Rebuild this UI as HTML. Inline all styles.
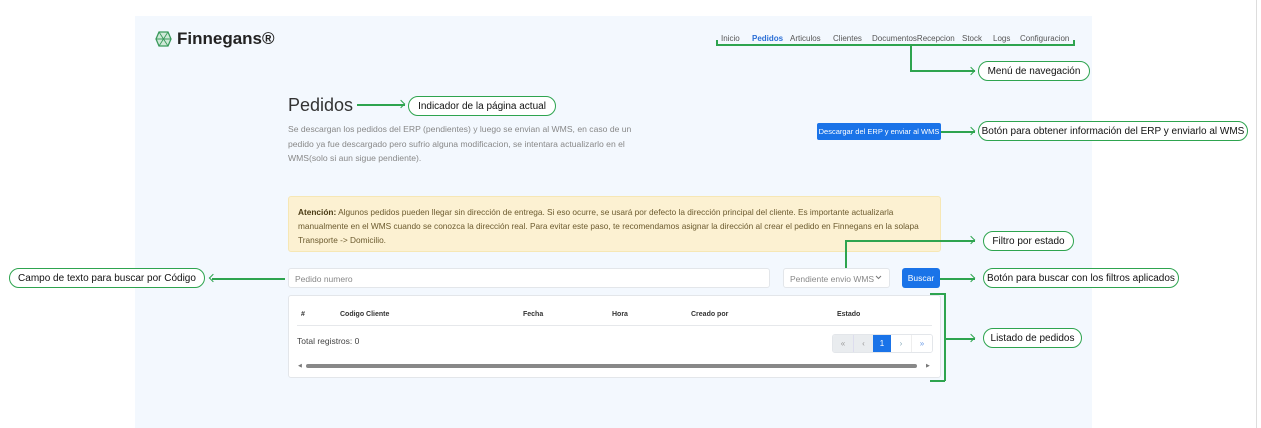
<!DOCTYPE html>
<html><head><meta charset="utf-8"><style>
*{margin:0;padding:0;box-sizing:border-box}
body{width:1261px;height:428px;background:#fff;position:relative;overflow:hidden;font-family:"Liberation Sans",sans-serif}
.abs{position:absolute}
.app{left:135px;top:16px;width:957px;height:412px;background:#f3f8fe}
.pill{position:absolute;border:1.5px solid #2ea44f;border-radius:11px;background:#fff;font-size:10px;color:#111;display:flex;align-items:center;justify-content:center;white-space:nowrap}
.g{position:absolute;background:#2ea44f}
.ar{position:absolute;width:6px;height:6px;border-top:1.5px solid #2ea44f;border-right:1.5px solid #2ea44f;transform:rotate(45deg)}
.al{position:absolute;width:6px;height:6px;border-bottom:1.5px solid #2ea44f;border-left:1.5px solid #2ea44f;transform:rotate(45deg)}
.nav{position:absolute;top:34px;font-size:8px;color:#555}
.th{position:absolute;top:311px;font-size:7px;font-weight:bold;color:#333}
</style></head><body>
<div class="abs app"></div>
<div class="abs" style="left:1256px;top:0;width:1px;height:428px;background:#ddd"></div>
<svg class="abs" style="left:155px;top:31px" width="17" height="16" viewBox="0 0 17 16"><polygon points="4,1 13,1 16,8 13,15 4,15 1,8" fill="#cfe9d8" stroke="#3a9a5c" stroke-width="1.3"/><path d="M4 1L13 15M13 1L4 15M1 8H16" stroke="#3a9a5c" stroke-width="0.9"/></svg>
<div class="abs" style="left:177px;top:29px;font-size:17px;font-weight:bold;color:#222">Finnegans®</div>
<div class="nav" style="left:721px">Inicio</div>
<div class="nav" style="left:752px;color:#2b6fd6;font-weight:bold">Pedidos</div>
<div class="nav" style="left:790px">Articulos</div>
<div class="nav" style="left:833px">Clientes</div>
<div class="nav" style="left:872px">DocumentosRecepcion</div>
<div class="nav" style="left:962px">Stock</div>
<div class="nav" style="left:993px">Logs</div>
<div class="nav" style="left:1020px">Configuracion</div>
<div class="g" style="left:716px;top:44px;width:359px;height:2px"></div>
<div class="g" style="left:716px;top:40px;width:2px;height:5px"></div>
<div class="g" style="left:1073px;top:40px;width:2px;height:5px"></div>
<div class="g" style="left:910px;top:44px;width:2px;height:28px"></div>
<div class="g" style="left:910px;top:70px;width:65px;height:2px"></div>
<div class="ar" style="left:968px;top:68px"></div>
<div class="pill" style="left:978px;top:61px;width:112px;height:20px">Menú de navegación</div>
<div class="abs" style="left:288px;top:95px;font-size:18px;color:#333">Pedidos</div>
<div class="g" style="left:357px;top:104px;width:48px;height:1.5px"></div>
<div class="ar" style="left:398px;top:101px"></div>
<div class="pill" style="left:408px;top:96px;width:148px;height:20px">Indicador de la página actual</div>
<div class="abs" style="left:288px;top:122px;width:345px;font-size:8.6px;line-height:14.5px;color:#888">Se descargan los pedidos del ERP (pendientes) y luego se envian al WMS, en caso de un pedido ya fue descargado pero sufrio alguna modificacion, se intentara actualizarlo en el WMS(solo si aun sigue pendiente).</div>
<div class="abs" style="left:817px;top:123px;width:124px;height:17px;background:#1a73e8;border-radius:2px;color:#fff;font-size:7.5px;display:flex;align-items:center;justify-content:center">Descargar del ERP y enviar al WMS</div>
<div class="g" style="left:941px;top:131px;width:34px;height:1.5px"></div>
<div class="ar" style="left:968px;top:128px"></div>
<div class="pill" style="left:978px;top:121px;width:270px;height:20px">Botón para obtener información del ERP y enviarlo al WMS</div>
<div class="abs" style="left:288px;top:196px;width:653px;height:56px;background:#fcf1d2;border:1px solid #f6e7b5;border-radius:3px;padding:8px 9px;font-size:8.3px;line-height:14px;color:#6b5a2e"><b style="color:#4a3b14">Atención:</b> Algunos pedidos pueden llegar sin dirección de entrega. Si eso ocurre, se usará por defecto la dirección principal del cliente. Es importante actualizarla manualmente en el WMS cuando se conozca la dirección real. Para evitar este paso, te recomendamos asignar la dirección al crear el pedido en Finnegans en la solapa Transporte -&gt; Domicilio.</div>
<div class="abs" style="left:288px;top:268px;width:482px;height:20px;background:#fff;border:1px solid #e3e6ea;border-radius:3px;font-size:8.5px;color:#888;padding:5px 6px">Pedido numero</div>
<div class="abs" style="left:783px;top:268px;width:107px;height:20px;background:#fff;border:1px solid #e3e6ea;border-radius:3px;font-size:8.5px;color:#888;padding:5px 6px;white-space:nowrap">Pendiente envio WMS</div>
<svg class="abs" style="left:875px;top:275px" width="7" height="5" viewBox="0 0 7 5"><path d="M1 1L3.5 3.5L6 1" stroke="#777" fill="none" stroke-width="1"/></svg>
<div class="abs" style="left:902px;top:268px;width:38px;height:20px;background:#1a73e8;border-radius:3px;color:#fff;font-size:8.5px;display:flex;align-items:center;justify-content:center">Buscar</div>
<div class="g" style="left:845px;top:240px;width:1.5px;height:28px"></div>
<div class="g" style="left:845px;top:240px;width:130px;height:1.5px"></div>
<div class="ar" style="left:968px;top:237px"></div>
<div class="pill" style="left:983px;top:231px;width:91px;height:20px">Filtro por estado</div>
<div class="g" style="left:940px;top:278px;width:35px;height:1.5px"></div>
<div class="ar" style="left:968px;top:275px"></div>
<div class="pill" style="left:983px;top:268px;width:196px;height:20px">Botón para buscar con los filtros aplicados</div>
<div class="g" style="left:212px;top:278px;width:73px;height:1.5px"></div>
<div class="al" style="left:210px;top:275px"></div>
<div class="pill" style="left:9px;top:268px;width:196px;height:20px">Campo de texto para buscar por Código</div>
<div class="abs" style="left:288px;top:295px;width:653px;height:83px;background:#fff;border:1px solid #e3e6ea;border-radius:3px"></div>
<div class="th" style="left:301px">#</div>
<div class="th" style="left:340px">Codigo Cliente</div>
<div class="th" style="left:523px">Fecha</div>
<div class="th" style="left:612px">Hora</div>
<div class="th" style="left:691px">Creado por</div>
<div class="th" style="left:837px">Estado</div>
<div class="abs" style="left:297px;top:325px;width:635px;height:1px;background:#e6e8eb"></div>
<div class="abs" style="left:297px;top:336px;font-size:8.5px;color:#444">Total registros: 0</div>
<div class="abs" style="left:832px;top:334px;width:101px;height:19px;border:1px solid #e3e6ea;border-radius:3px;display:flex;font-size:8px;overflow:hidden">
<div style="width:20px;background:#e9ecef;color:#999;text-align:center;line-height:17px">«</div>
<div style="width:20px;background:#e9ecef;color:#999;text-align:center;line-height:17px;border-left:1px solid #dde">‹</div>
<div style="width:18px;background:#1a73e8;color:#fff;text-align:center;line-height:17px">1</div>
<div style="width:20px;background:#fff;color:#8ab;text-align:center;line-height:17px">›</div>
<div style="width:21px;background:#fff;color:#6a9be8;text-align:center;line-height:17px;border-left:1px solid #eee">»</div></div>
<div class="abs" style="left:306px;top:364px;width:611px;height:4px;background:#888;border-radius:2px"></div>
<div class="abs" style="left:298px;top:363px;font-size:5px;color:#777">◀</div>
<div class="abs" style="left:926px;top:363px;font-size:5px;color:#777">▶</div>
<div class="g" style="left:944px;top:293px;width:1.5px;height:88px"></div>
<div class="g" style="left:930px;top:293px;width:15px;height:1.5px"></div>
<div class="g" style="left:930px;top:380px;width:15px;height:1.5px"></div>
<div class="g" style="left:944px;top:338px;width:31px;height:1.5px"></div>
<div class="ar" style="left:968px;top:335px"></div>
<div class="pill" style="left:983px;top:328px;width:99px;height:20px">Listado de pedidos</div>
</body></html>
